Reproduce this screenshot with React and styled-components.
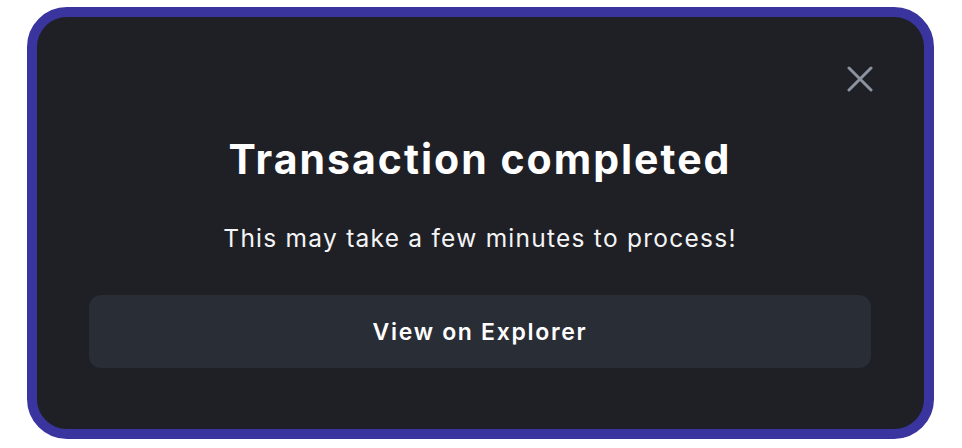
import styled, { createGlobalStyle } from "styled-components";

const GlobalStyle = createGlobalStyle`
  html, body {
    margin: 0;
    padding: 0;
    background: #ffffff;
  }
  * {
    box-sizing: border-box;
  }
`;

const Page = styled.div`
  width: 962px;
  height: 448px;
  padding: 7px 28px 9px 27px;
`;

const Modal = styled.div`
  position: relative;
  width: 100%;
  height: 100%;
  border: 10px solid #3a349e;
  border-radius: 40px;
  background: #1f2025;
  padding: 0 53px 61px 52px;
  display: flex;
  flex-direction: column;
  align-items: center;
  font-family: Inter, "Noto Sans", sans-serif;
`;

const CloseButton = styled.button`
  position: absolute;
  top: 47px;
  right: 49px;
  width: 30px;
  height: 30px;
  padding: 0;
  border: none;
  background: transparent;
  display: flex;
  align-items: center;
  justify-content: center;
  cursor: pointer;
`;

const Title = styled.h2`
  margin: 118px 0 0;
  font-size: 41px;
  line-height: 48px;
  font-weight: 700;
  letter-spacing: 2px;
  color: #ffffff;
`;

const Subtitle = styled.p`
  margin: 40px 0 0;
  font-size: 24.5px;
  line-height: 30px;
  font-weight: 400;
  letter-spacing: 1.25px;
  color: #f4f4f6;
`;

const ExplorerButton = styled.button`
  margin-top: auto;
  width: 100%;
  height: 73px;
  border: none;
  border-radius: 12px;
  background: #292d36;
  color: #ffffff;
  font-family: inherit;
  font-size: 23px;
  font-weight: 600;
  letter-spacing: 1.7px;
  cursor: pointer;
`;

const CloseIcon = () => (
  <svg width="26" height="26" viewBox="0 0 26 26" fill="none">
    <path
      d="M2 2 L24 24 M24 2 L2 24"
      stroke="#8b93a1"
      strokeWidth="3"
      strokeLinecap="round"
    />
  </svg>
);

const App = () => {
  return (
    <>
      <GlobalStyle />
      <Page>
        <Modal>
          <CloseButton aria-label="Close">
            <CloseIcon />
          </CloseButton>
          <Title>Transaction completed</Title>
          <Subtitle>This may take a few minutes to process!</Subtitle>
          <ExplorerButton>View on Explorer</ExplorerButton>
        </Modal>
      </Page>
    </>
  );
};

export default App;
